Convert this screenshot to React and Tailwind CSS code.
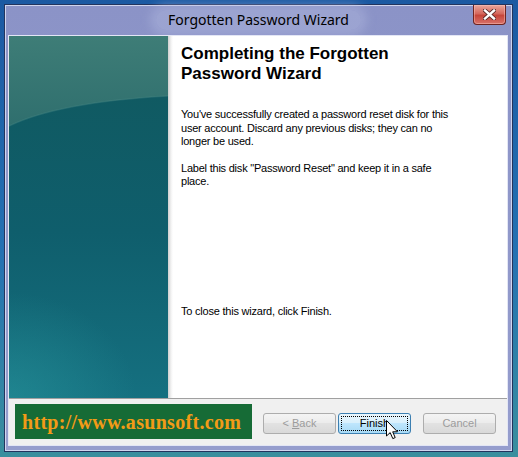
import React from 'react';

function CloseGlyph() {
  return (
    <svg width="13" height="11" viewBox="0 0 13 11">
      <path d="M2 1.5 L11 9.5 M11 1.5 L2 9.5" stroke="#5a2a28" strokeWidth="4.2" strokeLinecap="square" />
      <path d="M2 1.5 L11 9.5 M11 1.5 L2 9.5" stroke="#ffffff" strokeWidth="2.4" strokeLinecap="square" />
    </svg>
  );
}

function TealPanel() {
  return (
    <svg width="159" height="362" viewBox="0 0 159 362" className="block">
      <defs>
        <linearGradient id="top" x1="0" y1="0" x2="0" y2="1">
          <stop offset="0" stopColor="#3e7d77" />
          <stop offset="0.3" stopColor="#2c6c6c" />
          <stop offset="1" stopColor="#1d6468" />
        </linearGradient>
        <linearGradient id="deep" x1="0" y1="0" x2="0" y2="1">
          <stop offset="0" stopColor="#105a62" />
          <stop offset="0.45" stopColor="#0f5e6c" />
          <stop offset="1" stopColor="#157080" />
        </linearGradient>
        <radialGradient id="glow" cx="0" cy="1" r="0.8">
          <stop offset="0" stopColor="#2a9aa0" stopOpacity="0.5" />
          <stop offset="1" stopColor="#2a9aa0" stopOpacity="0" />
        </radialGradient>
      </defs>
      <rect width="159" height="362" fill="url(#top)" />
      <path d="M0 90 Q50 66 159 60 L159 362 L0 362 Z" fill="url(#deep)" />
      <path d="M0 90 Q50 66 159 60" stroke="#4a8a86" strokeOpacity="0.35" strokeWidth="1.5" fill="none" />
      <rect x="0" y="230" width="159" height="132" fill="url(#glow)" />
    </svg>
  );
}

function Cursor() {
  return (
    <svg width="13" height="20" viewBox="0 0 13 20" className="absolute left-[386px] top-[420px]">
      <path d="M0.5 0.5 L0.5 16 L4.2 12.6 L6.8 18.6 L9.2 17.6 L6.7 11.8 L11.5 11.8 Z" fill="#ffffff" stroke="#000000" strokeWidth="1" strokeLinejoin="round" />
    </svg>
  );
}

function WizButton({ children, active, disabled }) {
  return (
    <div
      className={
        active
          ? 'flex h-[21px] w-[73px] items-center justify-center rounded-[3px] border border-[#3c7fb1] bg-[linear-gradient(to_bottom,#eaf6fd,#d9f0fc_45%,#bee6fd_50%,#a7d9f5)] p-[2px] text-black'
          : 'flex h-[21px] w-[73px] items-center justify-center rounded-[3px] border border-[#adadad] bg-[linear-gradient(to_bottom,#f4f4f4,#ececec_45%,#e2e2e2_50%,#d9d9d9)] p-[2px]'
      }
    >
      <div
        className={
          active
            ? 'flex h-full w-full items-center justify-center border border-dotted border-black'
            : 'flex h-full w-full items-center justify-center'
        }
      >
        <span className={disabled ? 'text-[#9c9c9c]' : 'text-black'}>{children}</span>
      </div>
    </div>
  );
}

export default function App() {
  return (
    <div className="relative h-[457px] w-[518px] overflow-hidden bg-[linear-gradient(to_bottom,#1b59a2,#2471b2_55%,#3a8f9e)] pl-[4px] pt-[4px] font-['Liberation_Sans',Arial,sans-serif]">
      <div className="flex h-[448px] w-[509px] flex-col border border-[#23345e] bg-[linear-gradient(to_bottom,#8b93c7,#959dcd)] shadow-[inset_0_0_0_1px_rgba(230,233,250,0.75)]">
        {/* title bar */}
        <div className="grid h-[30px] grid-cols-[1fr_auto_1fr] items-start">
          <div />
          <div className="mt-[5px] rounded-[14px] bg-[rgba(180,187,226,0.4)] px-[12px] text-[14px] leading-[20px] text-black shadow-[0_0_10px_6px_rgba(180,187,226,0.4)] font-['Noto_Sans','Open_Sans',sans-serif]">
            Forgotten Password Wizard
          </div>
          <div className="flex justify-end pr-[6px]">
            <div className="flex h-[20px] w-[33px] items-center justify-center rounded-b-[4px] border border-t-0 border-[#6e2420] bg-[linear-gradient(to_bottom,#e9a69b,#d5685d_45%,#c6453a_55%,#d9726a)] shadow-[inset_0_0_0_1px_rgba(255,200,190,0.45)]">
              <CloseGlyph />
            </div>
          </div>
        </div>

        {/* client area */}
        <div className="ml-[3px] flex h-[411px] w-[500px] flex-col border border-[#e3e6f5]">
          <div className="flex h-[362px]">
            <TealPanel />
            <div className="flex-1 bg-[linear-gradient(to_right,#cfcfcf,#f2f2f2_3px,#ffffff_5px)] pl-[13px] pt-[8px] text-black">
              <h1 className="text-[17px] font-bold leading-[20px]">
                Completing the Forgotten
                <br />
                Password Wizard
              </h1>
              <div className="mt-[24px] text-[11px] leading-[13.5px] tracking-[-0.02em]">
                <p>
                  You've successfully created a password reset disk for this
                  <br />
                  user account. Discard any previous disks; they can no
                  <br />
                  longer be used.
                </p>
                <p className="mt-[13px]">
                  Label this disk "Password Reset" and keep it in a safe
                  <br />
                  place.
                </p>
                <p className="mt-[116px]">To close this wizard, click Finish.</p>
              </div>
            </div>
          </div>
          <div className="h-px bg-[#a0a0a0]" />
          <div className="flex h-[46px] items-start bg-[#f0f0f0] text-[11px]">
            <div className="ml-[6px] mt-[5px] flex h-[35px] w-[237px] items-center bg-[#166b36] pl-[7px]">
              <span className="font-['Liberation_Serif','Times_New_Roman',serif] text-[20px] font-bold leading-none tracking-[0.3px] text-[#f29b17]">
                http://www.asunsoft.com
              </span>
            </div>
            <div className="ml-[11px] mt-[14px] flex">
              <WizButton disabled>
                &lt; <span className="underline">B</span>ack
              </WizButton>
              <div className="ml-[2px]">
                <WizButton active>Finish</WizButton>
              </div>
              <div className="ml-[12px]">
                <WizButton disabled>Cancel</WizButton>
              </div>
            </div>
          </div>
        </div>
      </div>
      <Cursor />
    </div>
  );
}
